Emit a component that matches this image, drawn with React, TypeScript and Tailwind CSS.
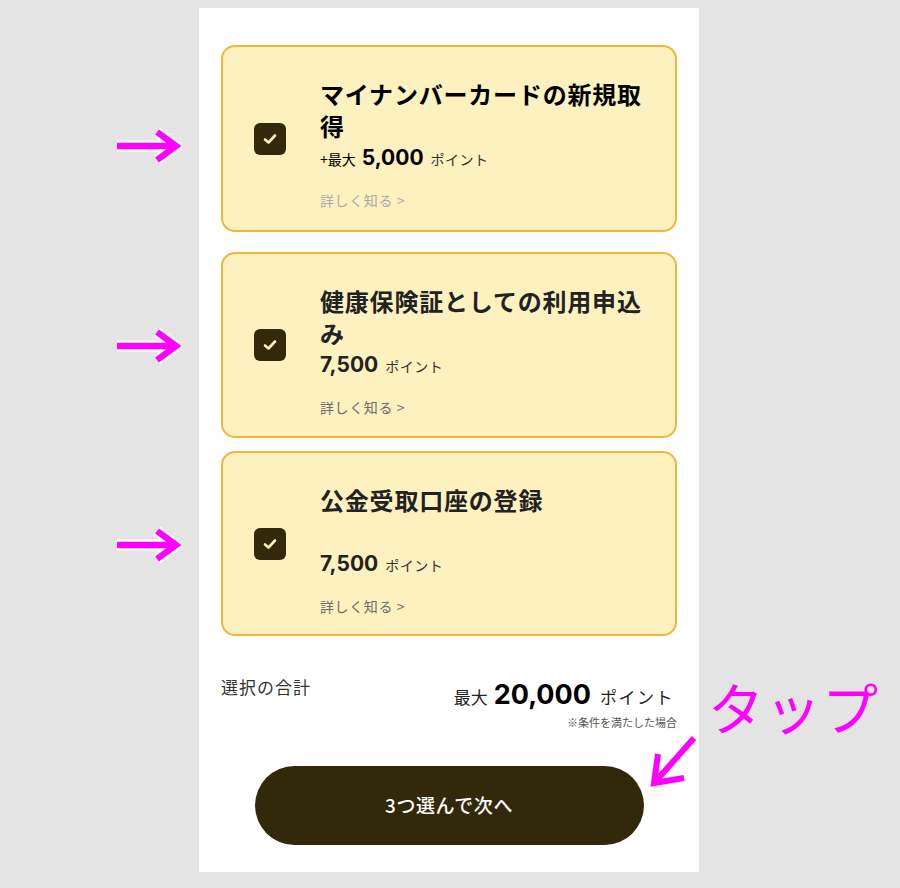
import React from 'react'

type Item = {
  title: string
  prefix?: string
  points: string
  first?: boolean
}

const items: Item[] = [
  { title: 'マイナンバーカードの新規取得', prefix: '+最大', points: '5,000', first: true },
  { title: '健康保険証としての利用申込み', points: '7,500' },
  { title: '公金受取口座の登録', points: '7,500' },
]

const jp = { fontFamily: '"Noto Sans CJK JP", "Noto Sans", sans-serif' }
const num = { fontFamily: 'Inter, "Noto Sans CJK JP", sans-serif' }

function Checkbox() {
  return (
    <div className="flex h-[32px] w-[32px] shrink-0 items-center justify-center rounded-[6px] bg-[#332a0b]">
      <svg width="14" height="12" viewBox="0 0 14 12" fill="none">
        <path d="M2 6.5 L5.5 9.5 L12 2.5" stroke="#fdf1c0" strokeWidth="2.6" strokeLinecap="round" strokeLinejoin="round" />
      </svg>
    </div>
  )
}

function Card({ item, className }: { item: Item; className: string }) {
  const ink = item.first ? 'text-black' : 'text-[#222]'
  return (
    <div className={`flex items-center rounded-[14px] border-2 border-[#f0b73a] bg-[#fdf1c0] pl-[31px] ${className}`}>
      <Checkbox />
      <div className="ml-[34px] w-[336px] self-stretch pt-[31px]">
        <div className={`min-h-[64px] text-[24px] font-bold leading-[32px] tracking-[0.8px] ${ink}`}>
          {item.title}
        </div>
        <div className={`flex h-[28px] items-baseline ${ink}`}>
          {item.prefix && <span className="mr-[6px] text-[14px]">{item.prefix}</span>}
          <span className="text-[21px] font-bold" style={num}>{item.points}</span>
          <span className="ml-[7px] text-[14px] tracking-[0.5px] text-[#333]">ポイント</span>
        </div>
        <div className={`mt-[20px] text-[14px] leading-[20px] tracking-[0.6px] ${item.first ? 'text-[#aaa]' : 'text-[#6b6b6b]'}`}>
          詳しく知る&nbsp;&gt;
        </div>
      </div>
    </div>
  )
}

function SideArrow({ top }: { top: number }) {
  return (
    <svg
      width="70"
      height="40"
      viewBox="0 0 70 40"
      className="absolute left-[112px]"
      style={{ top }}
      fill="none"
    >
      <g strokeLinecap="butt" strokeLinejoin="miter">
        <path d="M5 19 H62 M45 5 L64 19 L45 33" stroke="#fff" strokeWidth="11" />
        <path d="M5 19 H62 M45 5 L64 19 L45 33" stroke="#ff00ff" strokeWidth="6.5" />
      </g>
    </svg>
  )
}

export default function App() {
  return (
    <div className="relative min-h-[888px] w-[900px] bg-[#e4e4e4] pt-[8px]" style={jp}>
      <div className="ml-[199px] flex h-[864px] w-[500px] flex-col bg-white px-[22px] pt-[37px]">
        <Card item={items[0]} className="h-[187px]" />
        <Card item={items[1]} className="mt-[20px] h-[186px]" />
        <Card item={items[2]} className="mt-[13px] h-[185px]" />

        {/* Summary */}
        <div className="mt-[39px] flex items-start justify-between">
          <div className="text-[17px] leading-[24px] tracking-[1px] text-[#333]">選択の合計</div>
          <div className="flex flex-col items-end">
            <div className="flex h-[36px] items-baseline pr-[3px] text-[#222]">
              <span className="text-[17px]">最大</span>
              <span className="ml-[6px] text-[27px] font-bold text-black" style={num}>20,000</span>
              <span className="ml-[9px] text-[17px] tracking-[1.5px]">ポイント</span>
            </div>
            <div className="mt-[3px] text-[11px] leading-[16px] text-[#555]">※条件を満たした場合</div>
          </div>
        </div>

        <button className="mx-auto mt-[36px] flex h-[79px] w-[389px] items-center justify-center rounded-full bg-[#32290a] text-[19px] font-medium tracking-[0.6px] text-white">
          3つ選んで次へ
        </button>
      </div>

      {/* annotations */}
      <SideArrow top={127} />
      <SideArrow top={327} />
      <SideArrow top={526} />

      <div className="absolute left-[708px] top-[678px] text-[56px] leading-[56px] tracking-[1px] text-[#ff00ff]">タップ</div>
      <svg width="56" height="58" viewBox="0 0 56 58" className="absolute left-[648px] top-[732px]" fill="none">
        <path d="M46 6 L7 50 M10 22 L6 51 L36 46" stroke="#ff00ff" strokeWidth="6" strokeLinejoin="miter" />
      </svg>
    </div>
  )
}
